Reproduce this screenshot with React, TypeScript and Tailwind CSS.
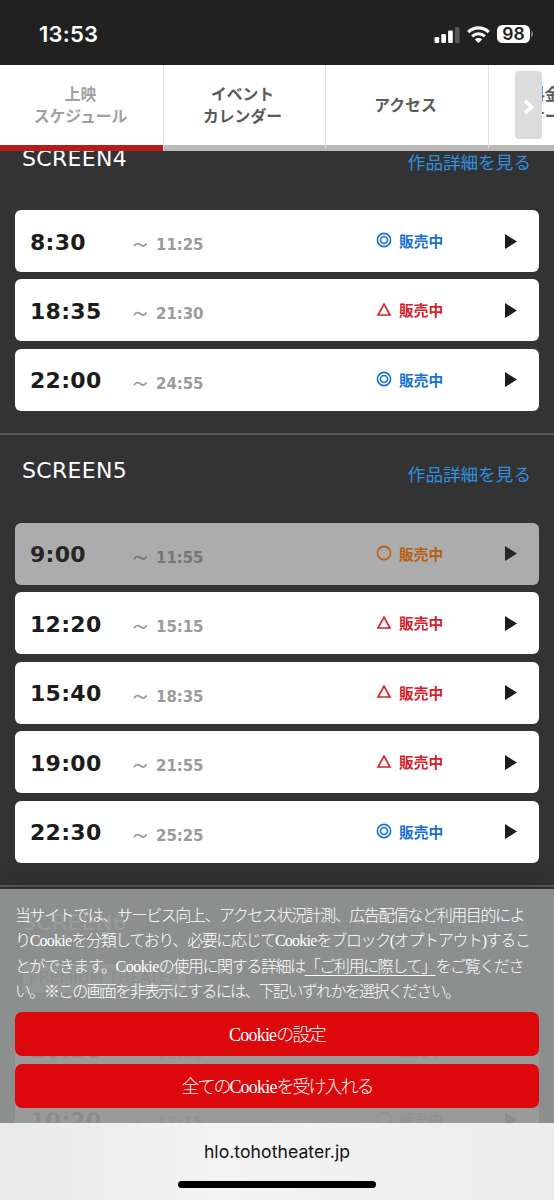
type Status = "good" | "fair" | "few";

type Show = {
    start: string;
    end: string;
    status: Status;
    past?: boolean;
};

type Screen = {
    name: string;
    badge?: string;
    shows: Show[];
};

const screens: Screen[] = [
    {
        name: "SCREEN4",
        shows: [
            { start: "8:30", end: "11:25", status: "good" },
            { start: "18:35", end: "21:30", status: "few" },
            { start: "22:00", end: "24:55", status: "good" },
        ],
    },
    {
        name: "SCREEN5",
        shows: [
            { start: "9:00", end: "11:55", status: "fair", past: true },
            { start: "12:20", end: "15:15", status: "few" },
            { start: "15:40", end: "18:35", status: "few" },
            { start: "19:00", end: "21:55", status: "few" },
            { start: "22:30", end: "25:25", status: "good" },
        ],
    },
    {
        name: "SCREEN6",
        badge: "PREMIUM THEATER",
        shows: [
            { start: "10:30", end: "12:45", status: "fair" },
            { start: "10:20", end: "13:15", status: "fair" },
        ],
    },
];

const statusColors: Record<Status, string> = {
    good: "text-[#1570d6]",
    fair: "text-[#b8600f]",
    few: "text-[#d6202a]",
};

function StatusMark({ status }: { status: Status }) {
    return (
        <svg width="16" height="16" viewBox="0 0 16 16" fill="none" stroke="currentColor" className="-mt-[3px]">
            {status === "few" ? (
                <path d="M8 2.2 L14 13 H2 Z" strokeWidth="1.7" />
            ) : (
                <circle cx="8" cy="8" r="6.6" strokeWidth="1.6" />
            )}
            {status === "good" && <circle cx="8" cy="8" r="3.5" strokeWidth="1.6" />}
        </svg>
    );
}

function StatusBar() {
    return (
        <div className="flex h-[65px] shrink-0 items-center justify-between bg-[#212121] pt-[3px] pr-[21px] pl-[39px] text-white">
            <span className="font-['Inter',sans-serif] text-[22px] font-semibold tracking-[0.2px]">13:53</span>
            <div className="flex items-center">
                <svg width="26" height="17" viewBox="0 0 26 17" fill="#fff">
                    <rect x="0.5" y="11" width="4.7" height="6" rx="1.2" />
                    <rect x="7.3" y="8" width="4.7" height="9" rx="1.2" />
                    <rect x="14.1" y="4.6" width="4.7" height="12.4" rx="1.2" />
                    <rect x="20.9" y="1" width="4.7" height="16" rx="1.2" fill="#555" />
                </svg>
                <svg width="23" height="17" viewBox="0 0 23 17" fill="none" stroke="#fff" strokeWidth="3.2" className="ml-[7px]">
                    <path d="M1.3 6.1 C7 0.5 16 0.5 21.7 6.1" />
                    <path d="M5.2 10.3 C8.8 6.9 14.2 6.9 17.8 10.3" />
                    <path d="M11.5 17 L7.9 13.5 C10 11.6 13 11.6 15.1 13.5 Z" fill="#fff" stroke="none" />
                </svg>
                <div className="ml-[7px] flex h-[18px] w-[33px] items-center justify-center rounded-[5.5px] bg-white font-['Inter',sans-serif] text-[17.5px] font-semibold text-[#212121]">
                    98
                </div>
                <div className="ml-[1px] h-[6px] w-[2px] rounded-r-full bg-[#777]" />
            </div>
        </div>
    );
}

function Nav() {
    return (
        <nav className="relative flex h-[86px] shrink-0 overflow-hidden bg-white text-center text-[15.8px] leading-[22px] font-bold text-[#5a5a5a]">
            <div className="flex w-[163px] shrink-0 items-center justify-center border-b-[6px] border-[#b71c1c] pt-[2px] pr-[2px] text-[#a0a0a0]">
                上映
                <br />
                スケジュール
            </div>
            <div className="flex w-[162px] shrink-0 items-center justify-center border-b-[6px] border-l border-b-[#b9b9b9] border-l-[#e6e6e6] pt-[2px] pr-[4px]">
                イベント
                <br />
                カレンダー
            </div>
            <div className="flex w-[163px] shrink-0 items-center justify-center border-b-[6px] border-l border-b-[#b9b9b9] border-l-[#e6e6e6] pt-[2px] pr-[3px]">
                アクセス
            </div>
            <div className="flex w-[163px] shrink-0 items-center border-b-[6px] border-l border-b-[#b9b9b9] border-l-[#e6e6e6] pt-[2px] pl-[40px] text-left">
                料金
                <br />
                サービス
            </div>
            <div className="absolute top-[6px] left-[515px] flex h-[68px] w-[27px] items-center justify-center rounded-[4px] bg-[#dcdcdc]">
                <svg width="12" height="16" viewBox="0 0 12 16" fill="none" stroke="#fff" strokeWidth="3.8" className="mt-1">
                    <path d="M2 1.8 L8.6 8 L2 14.2" />
                </svg>
            </div>
        </nav>
    );
}

function ShowRow({ show }: { show: Show }) {
    return (
        <li
            className={`flex h-[62px] items-center rounded-[6px] pr-[22px] pl-[15px] ${
                show.past ? "bg-[#acacac]" : "bg-white"
            }`}
        >
            <span
                className={`w-[103px] pt-[2px] text-[22px] font-bold tracking-[0.3px] ${
                    show.past ? "text-[#262626]" : "text-[#1c1c1c]"
                }`}
            >
                {show.start}
            </span>
            <span
                className={`flex w-[243px] items-center gap-[8px] pt-[8px] text-[15px] font-bold tracking-[-0.05px] ${
                    show.past ? "text-[#777]" : "text-[#9b9b9b]"
                }`}
            >
                <svg width="15" height="6" viewBox="0 0 15 6" fill="none" stroke="currentColor" strokeWidth="1.9">
                    <path d="M1 4.2 C3 0.9 5.2 1.2 7.3 2.8 C9.5 4.5 11.5 4.8 13.5 1.6" />
                </svg>
                {show.end}
            </span>
            <span className={`flex items-center gap-[7px] pt-[2px] text-[14.7px] font-bold ${statusColors[show.status]}`}>
                <StatusMark status={show.status} />
                販売中
            </span>
            <svg
                width="12"
                height="15"
                viewBox="0 0 12 15"
                className={`ml-auto ${show.past ? "text-[#262626]" : "text-[#1c1c1c]"}`}
            >
                <path d="M0 0 L12 7.5 L0 15 Z" fill="currentColor" />
            </svg>
        </li>
    );
}

function ScreenSection({ screen }: { screen: Screen }) {
    return (
        <section className="border-t-2 border-[#585858] px-[15px] pb-[22px]">
            <div className={`flex items-start justify-between pr-[8px] pl-[7px] ${screen.badge ? "h-[77px]" : "h-[88px]"}`}>
                <h2 className="pt-[22.5px] text-[22px] leading-[28px] tracking-[0.3px] text-white">{screen.name}</h2>
                <a className="pt-[26.5px] text-[17.6px] leading-[28px] text-[#3191e0]">作品詳細を見る</a>
            </div>
            {screen.badge && (
                <div className="mb-[26px] ml-[8px] flex h-[29px] w-[163px] items-center justify-center rounded-[4px] bg-[#b8b8c8] text-[16px] tracking-[-0.1px] whitespace-nowrap text-[#222]">
                    {screen.badge}
                </div>
            )}
            <ul className="flex flex-col gap-[7.48px]">
                {screen.shows.map((show) => (
                    <ShowRow key={show.start} show={show} />
                ))}
            </ul>
        </section>
    );
}

function CookieBanner() {
    return (
        <div className="absolute inset-x-0 bottom-0 h-[234px] bg-[#939594]/94 px-[15px] pt-[14px] font-['Liberation_Serif','Noto_Sans_CJK_JP',serif] font-light text-white shadow-[0_-4px_24px_rgba(0,0,0,0.16)]">
            <p className="text-[16px] leading-[25.3px] whitespace-nowrap">
                <span className="block tracking-[-1.43px]">
                    当サイトでは、サービス向上、アクセス状況計測、広告配信など利用目的によ
                </span>
                <span className="block tracking-[-1.35px]">
                    り<span className="tracking-[-0.75px]">Cookie</span>を分類しており、必要に応じて
                    <span className="tracking-[-0.75px]">Cookie</span>をブロック(オプトアウト)するこ
                </span>
                <span className="block tracking-[-1.41px]">
                    とができます。<span className="tracking-[-0.5px]">Cookie</span>の使用に関する詳細は
                    <a className="underline decoration-1 underline-offset-[3px]">「ご利用に際して」</a>をご覧くださ
                </span>
                <span className="block tracking-[-1.67px]">
                    い。※この画面を非表示にするには、下記いずれかを選択ください。
                </span>
            </p>
            <div className="mt-[8px] flex flex-col gap-[8px] text-[18px]">
                <button className="h-[44px] rounded-[7px] bg-[#dc080c] pt-[2px] tracking-[-1.8px]">
                    <span className="tracking-[-0.8px]">Cookie</span>の設定
                </button>
                <button className="h-[44px] rounded-[7px] bg-[#dc080c] pt-[2px] tracking-[-2px]">
                    全ての<span className="tracking-[-0.8px]">Cookie</span>を受け入れる
                </button>
            </div>
        </div>
    );
}

export default function App() {
    return (
        <div className="flex h-[1200px] w-[554px] flex-col overflow-hidden bg-[#333] font-['DejaVu_Sans','Noto_Sans_CJK_JP',sans-serif]" lang="ja">
            <StatusBar />
            <Nav />
            <main className="relative h-[972px] shrink-0 overflow-hidden">
                <div className="-mt-[31px]">
                    {screens.map((screen) => (
                        <ScreenSection key={screen.name} screen={screen} />
                    ))}
                </div>
                <CookieBanner />
            </main>
            <footer className="flex h-[77px] shrink-0 flex-col items-center justify-between bg-linear-to-r from-[#e9e9e9] via-[#f3f3f3] via-40% to-[#ececec] pt-[16px] pb-[12px]">
                <span className="font-['Inter',sans-serif] text-[17.6px] leading-[26px] tracking-[0.05px] text-[#111]">hlo.tohotheater.jp</span>
                <div className="h-[7px] w-[198px] rounded-full bg-black" />
            </footer>
        </div>
    );
}
